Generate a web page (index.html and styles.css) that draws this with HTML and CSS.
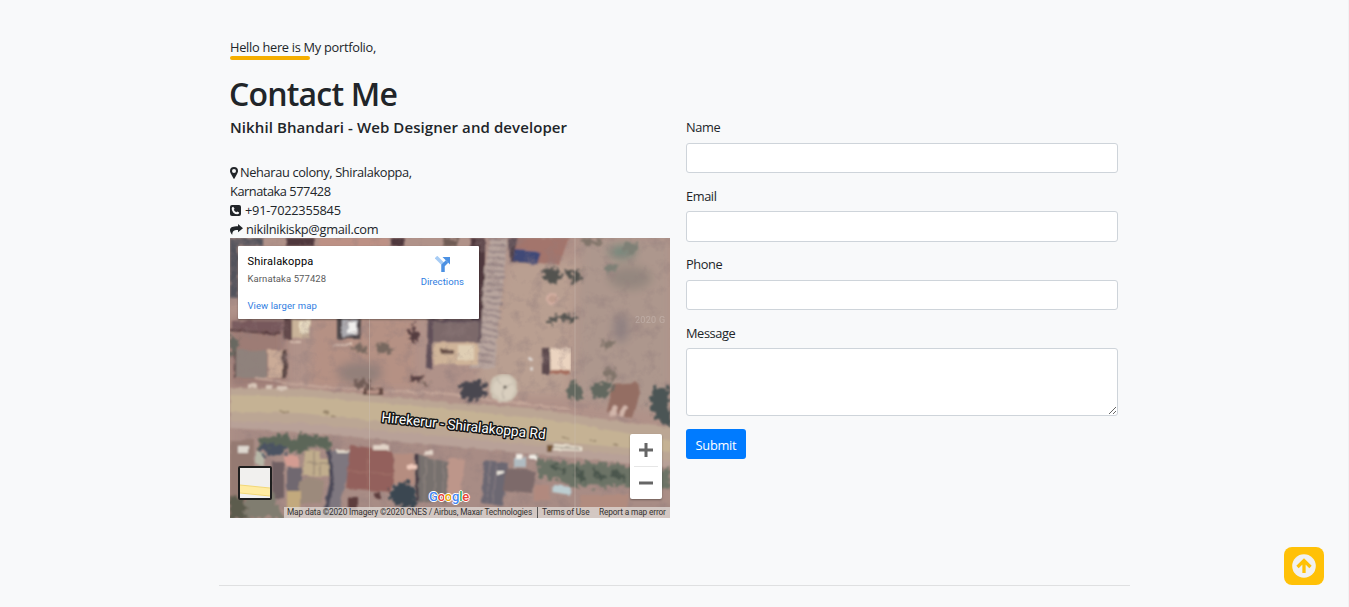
FILE: index.html
```
<!DOCTYPE html>
<html lang="en">
<head>
<meta charset="utf-8">
<title>Contact Me</title>
<link rel="stylesheet" href="styles.css">
</head>
<body>
<main class="container">
  <p class="intro"><span>Hello here is My portfolio,</span></p>
  <h1 class="title"><span>Contact Me</span></h1>
  <div class="row">
    <section class="info">
      <h2 class="subtitle"><span>Nikhil Bhandari - Web Designer and developer</span></h2>
      <div class="line"><svg class="pin" width="8" height="12" viewBox="0 0 8 12"><path fill-rule="evenodd" d="M4 0a4 4 0 0 1 4 4c0 1.1-.5 2.200-1 3L4.500 11.600q-.5.700-1 0L1 7C.5 6.200 0 5.100 0 4a4 4 0 0 1 4-4zm0 2a2 2 0 1 0 0 4 2 2 0 0 0 0-4z"/></svg><span class="t1">Neharau colony, Shiralakoppa,</span></div>
      <div class="line"><span class="t2">Karnataka 577428</span></div>
      <div class="line"><svg class="phone" width="11" height="11" viewBox="0 0 11 11"><rect width="11" height="11" rx="2"/><path fill="#f8f9fa" d="M3.200 1.700 4.600 3.800 3.800 4.700Q4.600 6.400 6.300 7.200L7.200 6.400 9.200 7.500Q9.200 9.200 7.500 9.300 5 9.200 3.200 7.400 1.500 5.500 1.700 3.200 1.900 2 3.200 1.700z"/></svg><span class="t3">+91-7022355845</span></div>
      <div class="line"><svg class="share" width="13" height="11" viewBox="0 0 13 11"><path d="M8 0 13 4.200 8 8.200V6C4.500 5.800 2.300 6.500 2.300 10.700 1.200 10 0 8 0 6.300 0 3 3 2.200 8 2.200z"/></svg><span class="t4">nikilnikiskp@gmail.com</span></div>
      <div class="map">
        <svg class="imagery" width="440" height="280" viewBox="0 0 440 280">
          <defs>
            <filter id="soft" x="0" y="0" width="100%" height="100%"><feTurbulence type="fractalNoise" baseFrequency=".12" numOctaves="2" seed="3" result="n"/><feDisplacementMap in="SourceGraphic" in2="n" scale="4" xChannelSelector="R" yChannelSelector="G"/><feGaussianBlur stdDeviation=".9"/></filter>
            <filter id="smear" x="-30%" y="-30%" width="160%" height="160%"><feGaussianBlur stdDeviation="5"/></filter>
            <filter id="ground" x="0" y="0" width="100%" height="100%"><feTurbulence type="fractalNoise" baseFrequency=".07" numOctaves="4" seed="8"/><feColorMatrix values="0 0 0 0 .28 0 0 0 0 .2 0 0 0 0 .2 2.400 0 0 0 -1.150"/></filter>
            <filter id="leaf" x="-20%" y="-20%" width="140%" height="140%"><feTurbulence type="fractalNoise" baseFrequency=".22" numOctaves="2" seed="5" result="n"/><feDisplacementMap in="SourceGraphic" in2="n" scale="13" xChannelSelector="R" yChannelSelector="G"/><feGaussianBlur stdDeviation="1.200"/></filter>
          </defs>
          <rect width="440" height="280" fill="#b09289"/>
          <g filter="url(#smear)">
            <path d="M278 22h70l-10 135h-95l15-60z" fill="#b99f91"/>
            <path d="M350 0h90v175l-95-14z" fill="#ad978d"/>
            <path d="M85 80h100v70H80z" fill="#b59184"/>
            <path d="M0 185l440 35v60H0z" fill="#a88c85"/>
            <path d="M0 80h55v70H0z" fill="#9d7b75"/>
            <ellipse cx="392" cy="14" rx="14" ry="7" fill="#71877a"/>
            <ellipse cx="400" cy="40" rx="22" ry="12" fill="#94877f"/>
            <ellipse cx="391" cy="90" rx="8" ry="15" fill="#8e8081"/>
            <ellipse cx="130" cy="135" rx="23" ry="12" fill="#93807a"/>
          </g>
          <g filter="url(#soft)">
            <path d="M0 0h33v8H8v52H0z" fill="#53535b"/><path d="M56 0h28v8H56zM160 0h14v8h-14zM240 0h15v98h-15z" fill="#4f383e"/><path d="M90 0h68v8H90z" fill="#bd9185"/>
            <path d="M260 0h18l-9 80-4 50h-25l11-35 3-55z" fill="#b8a59e"/>
            <path d="M267 0 264 65 253 126" stroke="#8f7d7f" stroke-width="18" stroke-dasharray="1.500 5" fill="none"/>
            <path d="M279 0h9l-3 14 26 11-31-1z" fill="#53444e"/><path d="M288 0h52l-11 26-21-1-1-12-22-1z" fill="#a3746c"/><path d="M285 12l26 2-4 12-24-3z" fill="#414877"/>
            <path d="M2 83h52l-2 12-50-4z" fill="#77595b"/><path d="M0 92 51 96" stroke="#53383b" stroke-width="2"/><path d="M54 80h7v22h-7z" fill="#64484b"/><path d="M61 81h19l-1 20-18-2z" fill="#c9b399"/><path d="M70 83h9v12h-9z" fill="#ece0c5"/>
            <path d="M107 80h24v21h-24z" fill="#504749"/><path d="M112 81h16v15l-16 3z" fill="#aaa9ae"/><path d="M118 84h9v11h-9z" fill="#f0efed"/><path d="M60 104h12M104 107h18" stroke="#d8bfb0" stroke-width="2"/>
            <path d="M5 112h32v28H5z" fill="#8f827c"/><path d="M38 112h18v28H38z" fill="#caab97"/><path d="M52 112h5v28h-5zM4 112h2v28H4z" fill="#5b4644"/>
            <path d="M198 81h53v23h-49v26h-6z" fill="#605058"/><path d="M203 84h46v20h-46z" fill="#7c696b"/><path d="M203 105h45v22h-45z" fill="#cfb499"/><path d="M210 111h14v5h-14z" fill="#6b5148"/><path d="M228 107h16v15h-16z" fill="#dfceb4"/>
            <path d="M312 110h8v27h-8z" fill="#5b484e"/><path d="M320 110h21v26h-20z" fill="#ebd4c0"/><path d="M321 132h19v4h-19z" fill="#a66e5f"/>
            <circle cx="322" cy="61" r="5" fill="#bf9d8e" stroke="#d6b1a4" stroke-width="2"/>
            <circle cx="301" cy="121" r="2" fill="#e2dcd8"/><circle cx="302" cy="130" r="2" fill="#e2dcd8"/>
            <path d="M25 140 90 149 220 156 340 172" stroke="#c5a79a" stroke-width="2" fill="none"/>
          </g>
          <rect width="440" height="280" filter="url(#ground)" opacity=".45"/>
          <g filter="url(#soft)">
            <path d="M0 150 75 151 150 158 220 165 300 170 400 185 442 188V224L400 218 300 208 220 200 140 192 65 186 0 185z" fill="#bba694"/>
            <path d="M0 157 80 159 220 171 320 182 442 203V214L320 203 220 191 70 175 0 174z" fill="#c5b294"/>
            <path d="M0 183 70 185 220 199 442 222V230L220 208 70 194 0 190z" fill="#b8a198"/>
            <path d="M50 173l9 1M94 174l5 1M101 177l5 1M332 199l8 1M360 202l6 1M383 206l5 1" stroke="#8d7a62" stroke-width="1.500"/>
            <path d="M133 150h20v7h-20z" fill="#644943"/><path d="M137 151h12v5h-12z" fill="#b49084"/><path d="M18 146h10v4H18zM36 147h6v4h-6zM48 148h9v4h-9z" fill="#d5c3b5"/>
            <circle cx="274" cy="150" r="14" fill="#cec4b4"/><circle cx="274" cy="150" r="11" fill="#d9cfbf"/><path d="M267 140l7 10 9-5M274 150l-1 10" stroke="#b7afa2" fill="none"/><circle cx="275" cy="149" r="1.500" fill="#4d4740"/>
            <path d="M382 146 408 144 410 154 403 181 377 174z" fill="#946e64"/><path d="M379 177l5-10 4 1-3 10zm9 1 5-11 4 1-4 11z" fill="#d2b6aa"/>
            <path d="M318 206h5v7h-5z" fill="#765636"/><path d="M324 206l29 3v4l-29-1z" fill="#eee6d5"/><path d="M324 209l27 2" stroke="#80736a"/>
            <path d="M0 202h24v78H0z" fill="#957a72"/><path d="M8 208h10v7H8z" fill="#dfd8d0"/><path d="M26 213h8v14h-8z" fill="#b7b7a7"/>
            <path d="M42 224h12v37H42z" fill="#6f6064"/><path d="M55 218h14v10H55z" fill="#d49c92"/><path d="M57 229h15v24H57z" fill="#6f676f"/>
            <path d="M75 212h14l1 9h10v17H73z" fill="#c1ad8d"/><path d="M76 225h23M84 213v24M90 224v13" stroke="#8f8070"/><path d="M69 244 80 239 94 243 91 265H69z" fill="#9c8a7b"/>
            <path d="M57 253h13v21H57z" fill="#c2a97d"/><path d="M101 213h19l-2 24-8 25 2 16H92l8-34z" fill="#7e777f"/><path d="M99 212l3 33-7 31" fill="none" stroke="#4b4958" stroke-width="4"/><path d="M107 212h13v3h-13z" fill="#e3dacc"/>
            <path d="M120 207 163 213 164 244 161 254 116 250z" fill="#93605c"/><path d="M117 233 163 236M139 210l-1 42" stroke="#a3726a" stroke-width="1"/><path d="M143 207h16v5h-16zM194 213h9v4h-9z" fill="#e1d3c7"/>
            <path d="M164 216h20v30h-20z" fill="#b58d80"/><path d="M187 216 220 225v39h-33z" fill="#77716e"/><path d="M196 220l-2 43M205 221l-1 43M213 224v40" stroke="#958983"/><path d="M187 216v47" stroke="#463e44" stroke-width="3"/><path d="M177 227h10v4h-10z" fill="#f0cabb"/>
            <path d="M218 220 235 222 229 265 217 265z" fill="#bd968a"/><path d="M254 222 278 225 273 268 252 265z" fill="#6c6772"/><path d="M267 224l-4 41M260 223l-3 41" stroke="#8b8184"/><path d="M267 233h7v3h-7z" fill="#ebe5dd"/>
            <path d="M276 230 306 233 301 255 273 252z" fill="#7d6a6a"/><path d="M284 219h12v11h-12z" fill="#b0bbc1"/><path d="M286 216h6v4h-6zM299 217h8v4h-8z" fill="#f2eee7"/><path d="M324 247l17 2-1 8-18-3z" fill="#bccdd1"/><path d="M304 247h15v15h-15z" fill="#b1897e"/>
            <path d="M118 260h10v12h-10zM145 254h5v7h-5z" fill="#5d3c3d"/><path d="M350 257h48v15h-48z" fill="#b18b7e"/>
          </g>
          <g filter="url(#leaf)">
            <path d="M315 30l13 1 4 10-9 5-10-4zM333 31l11 4 8-5-3 8 4 4-10 3zM317 78l13-1 7 3-12 2-4 6zM333 76l14 2-4 7-8-2z" fill="#53534f"/>
            <path d="M234 143l20 1 2 14-17 7-10-9z" fill="#48464f"/><path d="M337 144l13 1 2 14-13 2zM360 147l23-5-4 17-17 1z" fill="#62685f"/><path d="M423 151l17-1v40l-11-7-10-11z" fill="#4b5555"/>
            <path d="M28 201 54 196 66 203 70 196 99 199 101 214 82 208 72 215 55 212 46 218 29 211z" fill="#5b6658"/><path d="M30 207h24v10H34z" fill="#4b5362"/>
            <path d="M305 219 329 224 376 225 410 230 439 230 440 252 392 248 341 249 325 240 310 240z" fill="#6c7366"/><path d="M162 247l16-3 9 10-2 16-15-2-11-7z" fill="#3b4751"/>
            <path d="M322 227l14 7M345 230l9 12M363 230l10 12M382 233l13 8" stroke="#4b564e" stroke-width="5"/>
            <path d="M16 250l28 6 9 24H15z" fill="#807d70"/><path d="M0 258l15 4v18H0z" fill="#5c5c4e"/><path d="M0 93l8 11-2 13-6 1z" fill="#686860"/><path d="M183 85l6 14-6 7-4-8zM180 137l13 2-2 4-11-2z" fill="#553c3f"/>
            <path d="M146 106l12-2 3 10-12 2zM124 107l14 1-1 7-14-2z" fill="#77685f"/><path d="M125 142l14 1v7l-15-1zM188 143l11 1-5 3zM213 0h17v8h-17z" fill="#705b55"/><path d="M376 25l12 1-2 7-10 2zM393 5h15l-3 10-12-2z" fill="#7e8076"/>
            <path d="M371 102l14 1-3 6-10 2zM375 131l12 1-2 8-10 1zM350 1l24 1-6 6-14-2z" fill="#81746a"/>
          </g>
          <path d="M139.500 81V280M345 0V280" stroke="#cabdb3" opacity=".42"/>
          <text class="watermark" x="405" y="85">2020 G</text>
          <g transform="translate(151 184) rotate(6)"><text class="road" textLength="165" lengthAdjust="spacingAndGlyphs">Hirekerur - Shiralakoppa Rd</text></g>
        </svg>
        <div class="place">
          <div class="place-text">
            <strong>Shiralakoppa</strong><small>Karnataka 577428</small><a>View larger map</a>
          </div>
          <div class="directions">
            <svg width="16" height="16" viewBox="0 0 16 16"><path d="M1 1 8 8" stroke="#a7ccf5" stroke-width="3.500"/><path d="M8 16V9.500L12 5.500" fill="none" stroke="#4c91e3" stroke-width="3.500"/><path d="M7.500 1H15v7.500z" fill="#4c91e3"/></svg>
            <a>Directions</a>
          </div>
        </div>
        <div class="maptype"><svg width="30" height="30" viewBox="0 0 30 30"><rect width="30" height="30" fill="#f1f0ee"/><path d="M0 17 30 20V28L0 25z" fill="#ffeba1"/><path d="M0 17 30 20M0 25 30 28" stroke="#f2d777"/></svg></div>
        <div class="zoom"><svg width="32" height="65" viewBox="0 0 32 65"><path d="M9 16h14M16 9v14M9 49h14" stroke="#666" stroke-width="3"/><path d="M4 32.500h24" stroke="#e6e6e6"/></svg></div>
        <div class="google"><span class="b">G</span><span class="r">o</span><span class="y">o</span><span class="b">g</span><span class="g">l</span><span class="r">e</span></div>
        <div class="credits"><span class="c1">Map data ©2020 Imagery ©2020 CNES / Airbus, Maxar Technologies</span><span class="c2">Terms of Use</span><span class="c3">Report a map error</span></div>
      </div>
    </section>
    <form class="form">
      <label><span class="n">Name</span><input type="text"></label>
      <label><span class="n">Email</span><input type="text"></label>
      <label><span class="n">Phone</span><input type="text"></label>
      <label class="msg"><span class="n">Message</span><textarea></textarea></label>
      <button type="button"><span>Submit</span></button>
    </form>
  </div>
  <hr>
</main>
<a class="top"><svg width="24" height="24" viewBox="0 0 24 24"><circle cx="12" cy="12" r="11.800" fill="#f1f1f1"/><path d="M12 19V7M5.500 13l6.500-6.500 6.500 6.500" fill="none" stroke="#ffc107" stroke-width="3.300"/></svg></a>
</body>
</html>
```
FILE: styles.css
```
* { box-sizing: border-box; }
body { margin: 0; height: 607px; overflow: hidden; border-right: 1px solid #f1f2f3; background: #f8f9fa; color: #212529; font: 12.8px/19px "Open Sans", "Noto Sans", sans-serif; }
.container { width: 911px; margin-left: 219px; padding-top: 38px; }
.intro { margin: 0 11px; height: 22px; white-space: nowrap; letter-spacing: -.28px; }
.intro::after { content: ""; display: block; width: 80px; height: 4px; margin-top: -1px; border-radius: 2px; background: #f5ae00; }
.title { margin: 15px 11px 0 10px; height: 43px; font-size: 32px; line-height: 38px; font-weight: 600; letter-spacing: -.8px; white-space: nowrap; }
.row { display: flex; gap: 16px; padding-left: 11px; }
.info { width: 440px; }
.subtitle { margin: 0 0 26px; font-size: 15px; line-height: 19px; font-weight: 600; letter-spacing: .09px; white-space: nowrap; }
.line { display: flex; align-items: center; height: 19px; white-space: nowrap; letter-spacing: -.35px; }
.line svg { fill: #212529; flex: none; margin-right: 3px; }
.line .pin { margin-right: 2px; }
.line .phone { margin-right: 4px; }
.line span { margin-top: -1px; }
.t1 { letter-spacing: -.36px; }
.t2 { letter-spacing: -.46px; }
.t3 { letter-spacing: -.25px; }
.t4 { letter-spacing: -.3px; }
.map { position: relative; width: 440px; height: 280px; margin-top: -1px; overflow: hidden; font-family: Roboto, sans-serif; }
.imagery { display: block; }
.road { font: 400 14px Roboto, sans-serif; fill: #fff; stroke: #161616; stroke-width: 3px; paint-order: stroke; stroke-linejoin: round; }
.watermark { font: 9px Roboto, sans-serif; fill: #fff; opacity: .2; letter-spacing: .3px; }
.place { position: absolute; left: 8px; top: 8px; width: 241px; height: 73px; display: flex; justify-content: space-between; padding: 9px 15px 0 9.500px; background: #fff; border-radius: 1px; box-shadow: 0 1px 2px #0005; }
.place-text { display: flex; flex-direction: column; white-space: nowrap; }
.place-text strong { font-size: 11px; line-height: 13px; font-weight: 400; color: #000; letter-spacing: .2px; }
.place-text small { margin-top: 5px; font-size: 9.500px; line-height: 12px; color: #5b5b5b; letter-spacing: .08px; }
.place a { font-size: 9.500px; line-height: 12px; color: #2f7de1; letter-spacing: .07px; }
.place-text a { margin-top: 15px; }
.directions { display: flex; flex-direction: column; align-items: center; padding-top: 1px; }
.directions svg { margin-left: 2px; }
.directions a { margin-top: 4px; }
.maptype { position: absolute; left: 8px; top: 228px; width: 34px; height: 34px; border: 2px solid #1e1e1e; border-radius: 2px; }
.maptype svg, .zoom svg { display: block; }
.zoom { position: absolute; left: 400px; top: 196px; width: 32px; height: 65px; background: #fff; border-radius: 2px; box-shadow: 0 1px 2px #0005; }
.google { position: absolute; left: 199px; top: 251px; font: 500 13px/16px Roboto, sans-serif; letter-spacing: -.2px; text-shadow: 1px 0 #fff, -1px 0 #fff, 0 1px #fff, 0 -1px #fff; }
.b { color: #4285f4; } .r { color: #e94335; } .y { color: #eda900; } .g { color: #34a853; }
.credits { position: absolute; right: 0; bottom: 0; width: 386px; height: 11px; display: flex; padding-left: 3px; background: #e3ddd9bb; color: #333; font-size: 8.300px; line-height: 11px; white-space: nowrap; letter-spacing: -.14px; }
.c1 { width: 251px; border-right: 1px solid #555; }
.c2 { width: 57px; padding-left: 4px; }
.c3 { padding-left: 4px; }
.form { width: 432px; letter-spacing: -.4px; }
.form label { display: block; height: 68.500px; }
.n { display: block; height: 25px; }
.form input { display: block; width: 100%; height: 30px; border: 1px solid #ced4da; border-radius: 3px; background: #fff; }
.form label:nth-child(2) .n { height: 24.500px; }
.form label:nth-child(2) input { height: 31px; }
.form textarea { display: block; width: 100%; height: 68px; border: 1px solid #ced4da; border-radius: 3px; background: #fff; resize: vertical; }
.form .msg { height: 105.500px; }
.form .msg .n { height: 24.500px; }
.form button { display: block; width: 60px; height: 30px; padding: 3px 0 0; border: 0; border-radius: 3px; color: #fff; background: #007bff; font: 12.800px/19px "Open Sans", sans-serif; letter-spacing: -.25px; }
hr { height: 1px; margin: 67px 0 0; border: 0; background: #dfe0e1; }
.top { position: absolute; left: 1284px; top: 547px; width: 40px; height: 38px; display: grid; place-items: center; border-radius: 8px; background: #ffc107; }
```
